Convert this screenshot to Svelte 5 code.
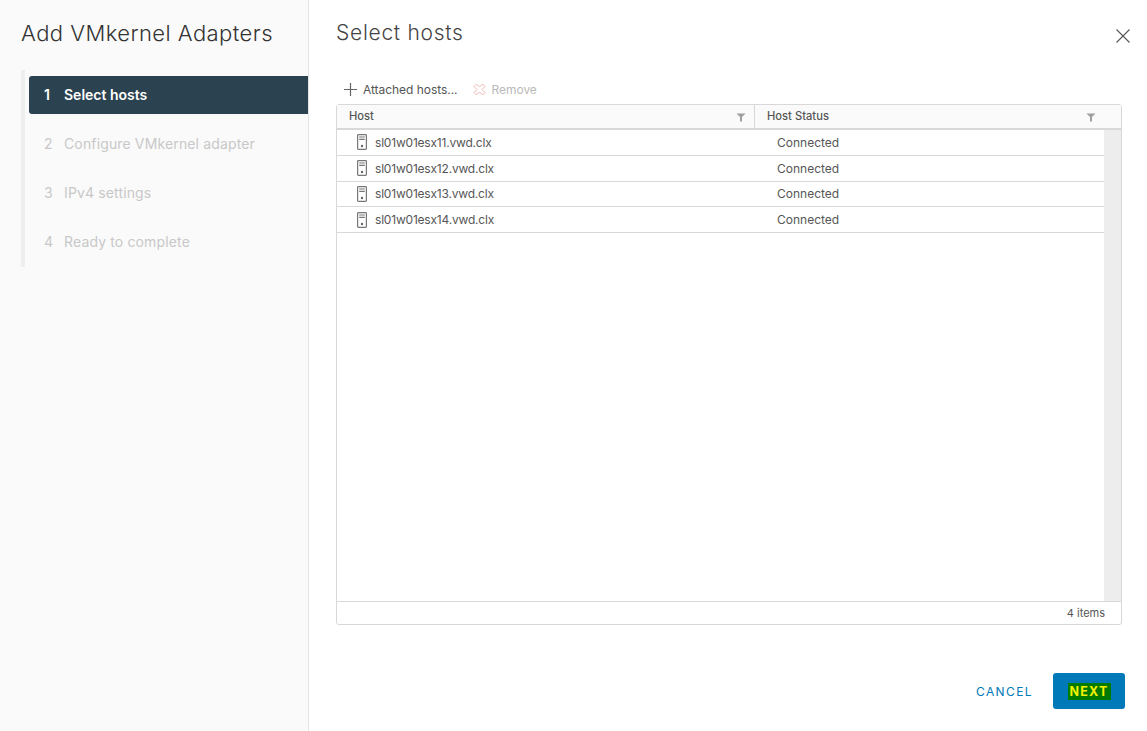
<script>
  const steps = ['Select hosts', 'Configure VMkernel adapter', 'IPv4 settings', 'Ready to complete'];
  const hosts = ['sl01w01esx11.vwd.clx', 'sl01w01esx12.vwd.clx', 'sl01w01esx13.vwd.clx', 'sl01w01esx14.vwd.clx'];
</script>

{#snippet filter()}
  <svg class="filter" viewBox="0 0 10 9" width="10" height="9"><path d="M0.5 0.5H9.5L6 4V8.5H4V4Z" fill="#a0a0a0" /></svg>
{/snippet}

<div class="page">
  <aside class="side">
    <h1>Add VMkernel Adapters</h1>
    <ol class="steps">
      {#each steps as s, i}
        <li class:active={i === 0}><span class="n">{i + 1}</span><span>{s}</span></li>
      {/each}
    </ol>
  </aside>
  <main class="main">
    <header class="head">
      <h2>Select hosts</h2>
      <svg class="close" viewBox="0 0 14 14" width="14" height="14"><path d="M0.5 0.5L13.5 13.5M13.5 0.5L0.5 13.5" stroke="#555" stroke-width="1.1" fill="none" /></svg>
    </header>
    <div class="toolbar">
      <span class="tool">
        <svg viewBox="0 0 13 13" width="13" height="13"><path d="M6.5 0V13M0 6.5H13" stroke="#666" stroke-width="1.2" fill="none" /></svg>
        Attached hosts...
      </span>
      <span class="tool off">
        <svg viewBox="0 0 13 13" width="13" height="13"><path d="M3.5 1L6.5 4L9.5 1L12 3.5L9 6.5L12 9.5L9.5 12L6.5 9L3.5 12L1 9.5L4 6.5L1 3.5Z" stroke="#f0b8b0" stroke-width="1" fill="none" /></svg>
        Remove
      </span>
    </div>
    <section class="grid">
      <div class="ghead">
        <div class="hc first">Host {@render filter()}</div>
        <div class="hc second">Host Status {@render filter()}</div>
      </div>
      <div class="gbody">
        <div class="rows">
          {#each hosts as h}
            <div class="row">
              <div class="c1">
                <svg viewBox="0 0 10 16" width="10" height="16"><rect x="0.6" y="0.6" width="8.8" height="14.8" rx="0.8" fill="#fff" stroke="#777" stroke-width="1.2" /><path d="M2.2 3H7.8M2.2 5.4H7.8" stroke="#777" stroke-width="1.2" /><circle cx="5" cy="12" r="1.2" fill="#666" /></svg>
                <span>{h}</span>
              </div>
              <div class="c2">Connected</div>
            </div>
          {/each}
        </div>
        <div class="scroll"></div>
      </div>
      <div class="gfoot">4 items</div>
    </section>
    <footer class="foot">
      <span class="cancel">CANCEL</span>
      <span class="next"><span class="mark">NEXT</span></span>
    </footer>
  </main>
</div>

<style>
  :global(body) { margin: 0; background: #fff; }
  .page {
    display: flex; width: 1147px; height: 731px; overflow: hidden;
    font-family: Inter, "Noto Sans", sans-serif; color: #565656;
  }
  .side {
    width: 308px; flex: none; background: #fafafa;
    border-right: 1px solid #e4e4e4; padding-top: 20px;
  }
  h1 {
    margin: 0 0 23px 21px; font-size: 22px; line-height: 27px; font-weight: 300;
    color: #333; letter-spacing: 0.44px; white-space: nowrap;
  }
  .steps {
    list-style: none; margin: 0 0 0 21px; padding: 6px 0 0 4px; height: 191px;
    border-left: 4px solid #eeeeee; display: flex; flex-direction: column; gap: 11px;
  }
  .steps li {
    height: 38px; box-sizing: border-box; padding: 0 0 2px 15px; display: flex; align-items: center;
    font-size: 14px; color: #c8c8c8; font-weight: 400; border-radius: 3px 0 0 3px; letter-spacing: 0.14px;
  }
  .steps li.active { background: #2b4251; color: #fff; font-weight: 600; letter-spacing: 0; }
  .n { width: 20px; flex: none; }
  .main { flex: 1; min-width: 0; padding: 0 22px 0 27px; display: flex; flex-direction: column; }
  .head { height: 65px; display: flex; justify-content: space-between; align-items: flex-start; padding-top: 19px; box-sizing: border-box; }
  h2 { margin: 0; font-size: 21px; line-height: 27px; font-weight: 300; color: #444; letter-spacing: 0.72px; }
  .close { margin-top: 10px; margin-right: -5px; }
  .toolbar { height: 39px; box-sizing: border-box; padding: 0 0 0 8px; display: flex; gap: 15px; align-items: center; margin-top: 5px; margin-bottom: -5px; font-size: 12px; letter-spacing: -0.04px; color: #565656; }
  .tool { display: inline-flex; align-items: center; gap: 6px; }
  .tool.off { color: #b9b9b9; }
  .grid {
    width: 786px; height: 521px; box-sizing: border-box; border: 1px solid #d8d8d8;
    border-radius: 3px; display: flex; flex-direction: column; background: #fff;
  }
  .ghead { height: 25px; flex: none; display: flex; background: #fafafa; border-bottom: 2px solid #d8d8d8; box-sizing: border-box; }
  .hc { display: flex; align-items: center; justify-content: space-between; padding-bottom: 1px; font-size: 11.2px; font-weight: 500; color: #565656; box-sizing: border-box; }
  .filter { margin-top: 2px; }
  .first { width: 418px; padding-left: 12px; padding-right: 8px; border-right: 1px solid #d8d8d8; }
  .second { flex: 1; padding-left: 12px; padding-right: 25px; }
  .gbody { flex: 1; min-height: 0; display: flex; }
  .rows { flex: 1; }
  .scroll { width: 17px; background: #ededed; }
  .row {
    height: 25.75px; box-sizing: border-box; display: flex; align-items: center;
    border-bottom: 1px solid #d8d8d8; font-size: 12px;
  }
  .c1 { width: 440px; box-sizing: border-box; padding-left: 20px; display: flex; align-items: center; gap: 8px; letter-spacing: -0.2px; }
  .gfoot { height: 23px; flex: none; border-top: 1px solid #d8d8d8; box-sizing: border-box; display: flex; align-items: center; justify-content: flex-end; padding-right: 16px; font-size: 11px; color: #565656; }
  .foot { display: flex; align-items: center; justify-content: flex-end; gap: 20px; margin-top: 48px; }
  .cancel { font-size: 12px; letter-spacing: 1.4px; color: #0079b8; font-weight: 400; }
  .next {
    width: 72px; height: 36px; background: #0079b8; border-radius: 3px;
    display: flex; align-items: center; justify-content: center;
  }
  .mark { background: #007a00; color: #f2f200; font-size: 12.5px; font-weight: 700; letter-spacing: 1.2px; padding: 1px 2px; line-height: 15px; }
</style>
